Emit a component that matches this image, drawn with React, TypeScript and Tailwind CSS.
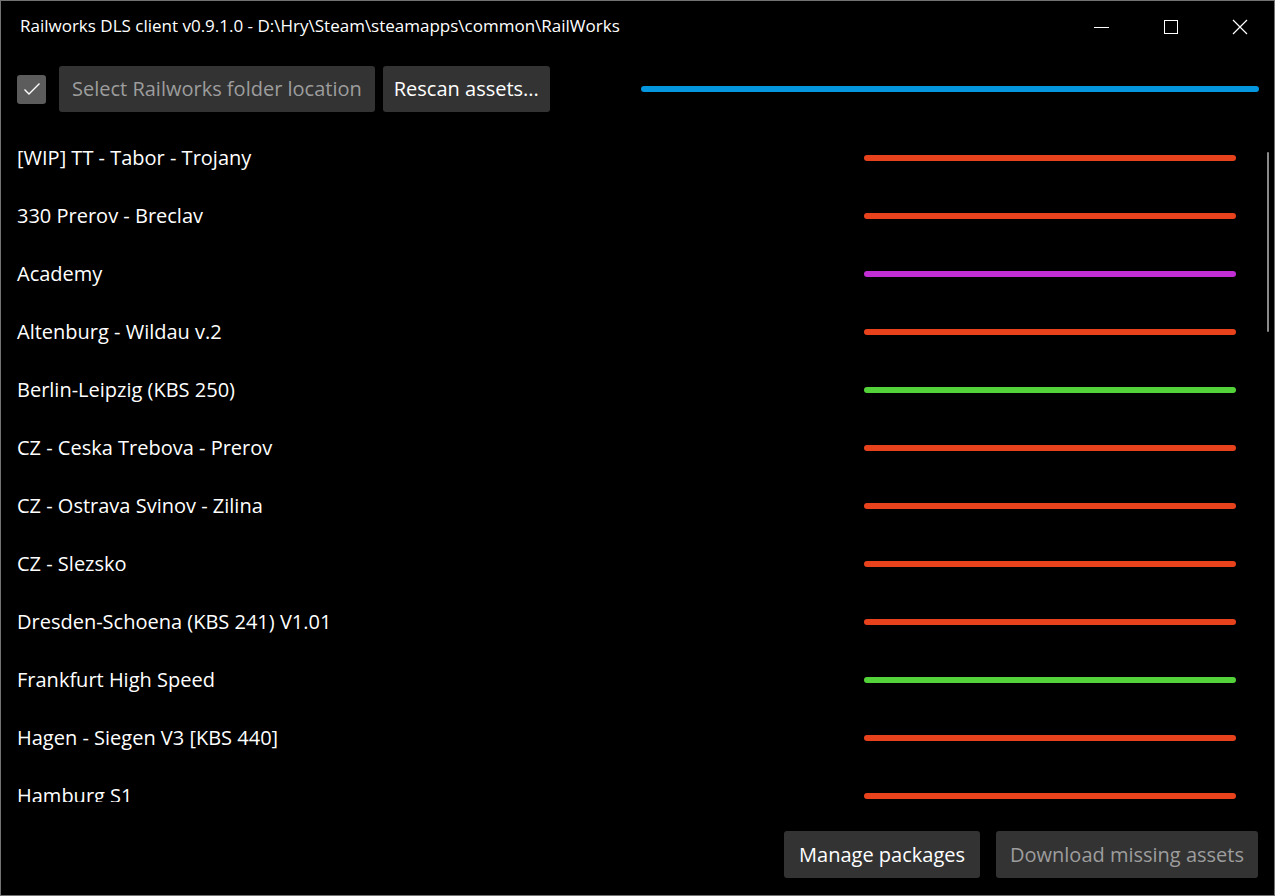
const rows: { name: string; color: string }[] = [
  { name: "[WIP] TT - Tabor - Trojany", color: "bg-[#e8421c]" },
  { name: "330 Prerov - Breclav", color: "bg-[#e8421c]" },
  { name: "Academy", color: "bg-[#c12fd4]" },
  { name: "Altenburg - Wildau v.2", color: "bg-[#e8421c]" },
  { name: "Berlin-Leipzig (KBS 250)", color: "bg-[#53d23a]" },
  { name: "CZ - Ceska Trebova - Prerov", color: "bg-[#e8421c]" },
  { name: "CZ - Ostrava Svinov - Zilina", color: "bg-[#e8421c]" },
  { name: "CZ - Slezsko", color: "bg-[#e8421c]" },
  { name: "Dresden-Schoena (KBS 241) V1.01", color: "bg-[#e8421c]" },
  { name: "Frankfurt High Speed", color: "bg-[#53d23a]" },
  { name: "Hagen - Siegen V3 [KBS 440]", color: "bg-[#e8421c]" },
  { name: "Hamburg S1", color: "bg-[#e8421c]" },
  { name: "Hannover - Bremen", color: "bg-[#e8421c]" },
];

export default function App() {
  return (
    <div className="w-[1275px] h-[896px] bg-black border border-[#727272] flex flex-col text-white font-['Open_Sans','Noto_Sans',sans-serif] overflow-hidden">
      {/* - Title bar - */}
      <div className="h-[52px] flex items-center shrink-0">
        <div className="pl-[19px] text-[17px] flex-1 leading-none -mt-[3px] whitespace-nowrap">
          Railworks DLS client v0.9.1.0 - D:\Hry\Steam\steamapps\common\RailWorks
        </div>
        <div className="flex h-full">
          <div className="w-[69px] flex items-center justify-center">
            <div className="w-[15px] h-px bg-white" />
          </div>
          <div className="w-[69px] flex items-center justify-center">
            <div className="w-[14px] h-[14px] border border-white" />
          </div>
          <div className="w-[69px] flex items-center justify-center">
            <svg width="16" height="16" viewBox="0 0 16 16">
              <path d="M1 1 L15 15 M15 1 L1 15" stroke="white" strokeWidth="1.2" />
            </svg>
          </div>
        </div>
      </div>

      {/* - Toolbar - */}
      <div className="flex items-center pl-[16px] pr-[15px] mt-[13px] h-[46px] shrink-0">
        <div className="w-[29px] h-[29px] rounded-[3px] bg-[#5c5c5c] flex items-center justify-center">
          <svg width="18" height="14" viewBox="0 0 18 14">
            <path d="M1.5 7.5 L6 12 L16.5 1.5" stroke="white" strokeWidth="1.4" fill="none" />
          </svg>
        </div>
        <button className="ml-[13px] h-[46px] px-[13px] rounded-[3px] bg-[#333333] text-[#9d9d9d] text-[20px] whitespace-nowrap">
          Select Railworks folder location
        </button>
        <button className="ml-[8px] h-[46px] px-[11px] rounded-[3px] bg-[#333333] text-white text-[20px] whitespace-nowrap">
          Rescan assets...
        </button>
        <div className="flex-1 pl-[91px]">
          <div className="h-[6px] rounded-full bg-[#0596e0]" />
        </div>
      </div>

      {/* - List - */}
      <div className="relative mt-[17px] h-[673px] overflow-hidden shrink-0">
        {rows.map((r) => (
          <div key={r.name} className="h-[58px] flex items-center pl-[16px]">
            <div className="flex-1 text-[20px]">{r.name}</div>
            <div className={`w-[372px] h-[6px] rounded-full mr-[38px] ${r.color}`} />
          </div>
        ))}
        <div className="absolute right-[5px] top-[23px] w-[2px] h-[180px] rounded-full bg-[#8a8a8a]" />
      </div>

      {/* - Footer - */}
      <div className="flex justify-end gap-[16px] pr-[16px] mt-[29px]">
        <button className="h-[47px] px-[15px] rounded-[3px] bg-[#333333] text-white text-[20px] whitespace-nowrap">
          Manage packages
        </button>
        <button className="h-[47px] px-[14px] rounded-[3px] bg-[#333333] text-[#9d9d9d] text-[20px] whitespace-nowrap">
          Download missing assets
        </button>
      </div>
    </div>
  );
}
